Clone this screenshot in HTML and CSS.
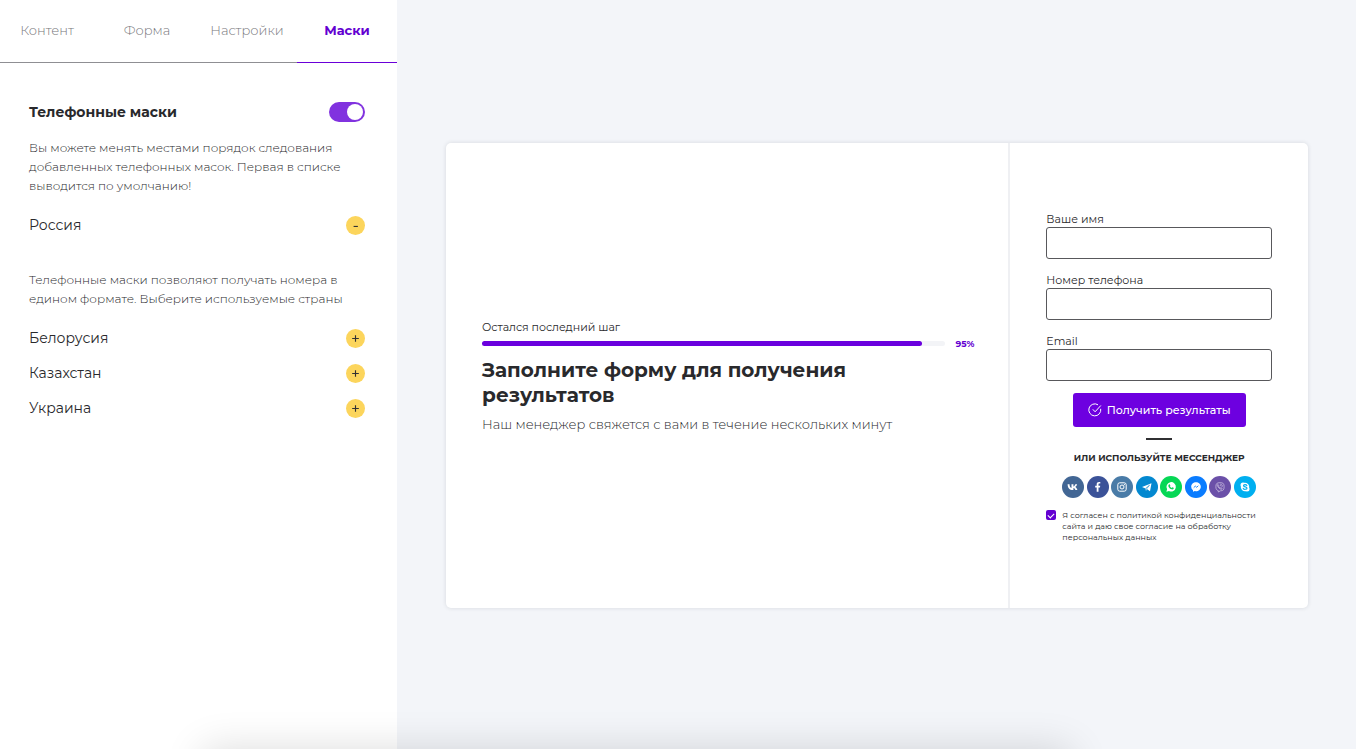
FILE: index.html
```html
<!DOCTYPE html>
<html lang="ru">
<head>
<meta charset="utf-8">
<title>Маски</title>
<link rel="stylesheet" href="styles.css">
</head>
<body>
<div class="app">
  <aside class="sidebar">
    <nav class="tabs">
      <button class="tab" type="button">Контент</button>
      <button class="tab" type="button">Форма</button>
      <button class="tab" type="button">Настройки</button>
      <button class="tab tab-active" type="button">Маски</button>
    </nav>
    <section class="settings">
      <div class="row">
        <label class="settings-title" for="masks">Телефонные маски</label>
        <input class="switch" id="masks" type="checkbox" role="switch" checked>
      </div>
      <p class="note">Вы можете менять местами порядок следования добавленных телефонных масок. Первая в списке выводится по умолчанию!</p>
      <ul class="countries">
        <li class="row"><span>Россия</span><button class="round" type="button" aria-label="Убрать Россия"><svg viewBox="0 0 20 20"><path d="M8 11h4.500"/></svg></button></li>
      </ul>
      <p class="note note-second">Телефонные маски позволяют получать номера в едином формате. Выберите используемые страны</p>
      <ul class="countries">
        <li class="row"><span>Белорусия</span><button class="round" type="button" aria-label="Добавить Белорусия"><svg viewBox="0 0 20 20"><path d="M6.500 10h7M10 6.500v7"/></svg></button></li>
        <li class="row"><span>Казахстан</span><button class="round" type="button" aria-label="Добавить Казахстан"><svg viewBox="0 0 20 20"><path d="M6.500 10h7M10 6.500v7"/></svg></button></li>
        <li class="row"><span>Украина</span><button class="round" type="button" aria-label="Добавить Украина"><svg viewBox="0 0 20 20"><path d="M6.500 10h7M10 6.500v7"/></svg></button></li>
      </ul>
    </section>
  </aside>
  <main class="preview">
    <div class="card">
      <section class="intro">
        <p class="step">Остался последний шаг</p>
        <div class="progress">
          <div class="track"><div class="fill" style="width:95%"></div></div>
          <span class="percent">95%</span>
        </div>
        <h1 class="headline">Заполните форму для получения результатов</h1>
        <p class="lead">Наш менеджер свяжется с вами в течение нескольких минут</p>
      </section>
      <form class="form">
        <div class="fields">
          <div class="field"><label for="name">Ваше имя</label><input id="name" type="text"></div>
          <div class="field"><label for="phone">Номер телефона</label><input id="phone" type="tel"></div>
          <div class="field"><label for="email">Email</label><input id="email" type="email"></div>
        </div>
        <button class="submit" type="button">
          <svg viewBox="0 0 14 14"><path d="M12.700 5.800A6 6 0 1 1 10 1.800M4.800 6.300l2.300 2.500 5.700-6.300"/></svg>
          Получить результаты
        </button>
        <hr class="dash">
        <p class="or">ИЛИ ИСПОЛЬЗУЙТЕ МЕССЕНДЖЕР</p>
        <div class="social">
          <a class="vk" href="#" aria-label="VK"><svg viewBox="0 0 22 22"><path fill="#fff" d="M10.800 14c-3.300 0-5.100-2.200-5.200-5.800h1.900c.1 2.600 1.200 3.700 2 3.900V8.200h1.900v2.300c.8-.1 1.600-1.100 1.900-2.300h1.800c-.3 1.300-1.200 2.300-1.900 2.700.7.300 1.700 1.200 2.200 3.100h-2c-.4-1.100-1.100-1.800-2-1.900V14z"/></svg></a>
          <a class="fb" href="#" aria-label="Facebook"><svg viewBox="0 0 22 22"><path fill="#fff" d="M9.700 15.800v-4.300H8.200V9.700h1.500V8.300c0-1.600.9-2.400 2.300-2.400.6 0 1.100.1 1.300.1v1.600h-.9c-.7 0-.9.4-.9.9v1.200h1.700l-.2 1.800h-1.500v4.300z"/></svg></a>
          <a class="ig" href="#" aria-label="Instagram"><svg viewBox="0 0 22 22"><g fill="none" stroke="#fff"><rect x="6.800" y="6.800" width="8.400" height="8.400" rx="2"/><circle cx="11" cy="11" r="2"/></g><circle cx="13.400" cy="8.600" r=".6" fill="#fff"/></svg></a>
          <a class="tg" href="#" aria-label="Telegram"><svg viewBox="0 0 22 22"><path fill="#fff" d="M6 11 15.500 7.200 14 15.200 11.300 13.300 9.900 14.800 9.500 12.400z"/><path fill="none" stroke="#0f88cc" stroke-width=".6" d="M9.600 12.400l3.900-3.200-2.900 3.600-.7 1.700"/></svg></a>
          <a class="wa" href="#" aria-label="WhatsApp"><svg viewBox="0 0 22 22"><path fill="#fff" d="M6.400 15.700l.7-2.500A4.700 4.700 0 1 1 9 15z"/><path fill="#06d755" d="M8.900 8.400c.5-.5.900-.2 1 .2l.4.900c.1.300-.3.600-.4.800.4.800 1 1.300 1.800 1.600.3-.1.500-.7.800-.6l1.100.5c.3.200.1.900-.2 1.200-.6.600-1.500.5-2.500 0-1.100-.5-2.100-1.500-2.400-2.600-.3-.8-.1-1.500.4-2z"/></svg></a>
          <a class="ms" href="#" aria-label="Messenger"><svg viewBox="0 0 22 22"><path fill="#fff" d="M11 6.200c2.700 0 4.800 1.900 4.800 4.500s-2.100 4.500-4.800 4.500l-1.200-.2-1.800.8v-1.600a4.300 4.300 0 0 1-1.800-3.500c0-2.600 2.100-4.500 4.800-4.500z"/><path fill="none" stroke="#0a7cff" stroke-width=".9" d="M8.700 11.700l1.600-1.600 1.400 1.200 1.600-1.600"/></svg></a>
          <a class="vb" href="#" aria-label="Viber"><svg viewBox="0 0 22 22"><g fill="none" stroke="#d3c8e5" stroke-width=".7"><path d="M9.300 14.600c-2-.5-2.400-1.600-2.400-3.900 0-3.100.9-4 4.100-4s4.100.9 4.100 4-.9 4.100-3.600 4.100L9.300 16z"/><path d="M9 8.400c-.8.400-.7 1.100-.2 2.100.7 1.300 1.800 2.300 3.200 2.800.6.200 1-.3 1.200-.8l-1.300-.9-.7.500c-.8-.3-1.300-.8-1.500-1.500l.4-.6zM11.200 8.200c1.500.1 2.300 1 2.300 2.400M11.300 9.400c.7.100 1 .5 1 1.100"/></g></svg></a>
          <a class="sk" href="#" aria-label="Skype"><svg viewBox="0 0 22 22"><g fill="#fff"><circle cx="11" cy="11" r="4.200"/><circle cx="9" cy="9" r="2.500"/><circle cx="13" cy="13" r="2.500"/></g><path fill="none" stroke="#00aff0" stroke-width="1.200" stroke-linecap="round" d="M12.800 9.500c-.5-1.100-3.300-1.100-3.300.2 0 1.500 3.500.8 3.500 2.500 0 1.400-3.200 1.400-3.700.2"/></svg></a>
        </div>
        <div class="consent">
          <input id="consent" type="checkbox" checked>
          <label for="consent">Я согласен с политикой конфиденциальности сайта и даю свое согласие на обработку персональных данных</label>
        </div>
      </form>
    </div>
  </main>
</div>
</body>
</html>
```
FILE: styles.css
```css
* { box-sizing: border-box; margin: 0; padding: 0; }

body {
  font-family: Montserrat, Inter, "Open Sans", sans-serif;
  color: #29292c;
  background: #f3f5f9;
}

button, input { font: inherit; color: inherit; }

.app {
  position: relative;
  display: grid;
  grid-template-columns: 397px 1fr;
  min-height: 100vh;
  overflow: hidden;
}

/* soft shade along the lower edge */
.app::after {
  content: "";
  position: absolute;
  top: 100%;
  left: 15%;
  right: 21%;
  height: 60px;
  box-shadow: 0 0 40px rgba(0, 0, 0, 0.14);
  pointer-events: none;
}

.sidebar { background: #fff; }

.tabs {
  display: grid;
  grid-template-columns: repeat(4, 1fr);
  margin-left: -3px;
}

.tab {
  height: 63px;
  padding-bottom: 2px;
  border: 0;
  border-bottom: 1px solid #8f8f93;
  background: none;
  font-size: 13px;
  font-weight: 300;
  color: #77777c;
}

.tab-active {
  border-color: #6a00d8;
  font-weight: 700;
  color: #6300d1;
}

.settings { padding: 39px 32px 39px 29px; }

.row {
  display: flex;
  align-items: center;
  justify-content: space-between;
  height: 20px;
}

.settings-title { font-size: 14px; font-weight: 700; }

.switch {
  appearance: none;
  width: 36px;
  height: 20px;
  padding: 2px;
  border-radius: 10px;
  background: #8132df;
}

.switch::before {
  content: "";
  display: block;
  width: 16px;
  height: 16px;
  border-radius: 50%;
  background: #fff;
}

.switch:checked::before { margin-left: auto; }

.note {
  margin: 16px 0 20px;
  font-size: 12px;
  font-weight: 300;
  line-height: 19px;
}

.note-second { margin-top: 35px; }

.countries {
  display: grid;
  gap: 15px;
  list-style: none;
  font-size: 14px;
}

.round {
  width: 19px;
  height: 19px;
  border: 0;
  border-radius: 50%;
  background: #fcd55c;
}

.round svg {
  display: block;
  fill: none;
  stroke: #303033;
  stroke-width: 1.2;
}

.preview {
  display: grid;
  align-items: center;
  padding: 50px 48px 48px 49px;
}

.card {
  display: grid;
  grid-template-columns: 565fr 298fr;
  min-height: 465px;
  border-radius: 5px;
  background: #fff;
  box-shadow: 0 0 4px rgba(40, 50, 60, 0.14);
}

.intro {
  display: flex;
  flex-direction: column;
  justify-content: center;
  padding: 36px 34px 36px 36px;
  border-right: 2px solid #eff0f3;
}

.step { font-size: 11px; line-height: 16px; }

.progress {
  display: flex;
  align-items: center;
  gap: 10px;
  margin: 2px 0 7px;
}

.track {
  flex: 1;
  height: 5px;
  border-radius: 3px;
  background: #f3f4f7;
}

.fill {
  height: 100%;
  border-radius: 3px;
  background: #6a00de;
}

.percent {
  font-size: 9px;
  font-weight: 700;
  line-height: 14px;
  color: #6300d1;
}

.headline {
  font-size: 20px;
  font-weight: 700;
  line-height: 25px;
}

.lead {
  margin-top: 7px;
  font-size: 13px;
  font-weight: 300;
  line-height: 18px;
}

.form {
  display: flex;
  flex-direction: column;
  align-items: center;
  justify-content: center;
  padding: 39px 36px 36px;
}

.fields {
  display: grid;
  gap: 13px;
  width: 100%;
}

.field { display: grid; }

.field label { font-size: 11px; line-height: 16px; }

.field input {
  width: 100%;
  height: 32px;
  padding: 0 8px;
  border: 1px solid #58585b;
  border-radius: 3px;
  background: #fff;
  font-size: 12px;
}

.submit {
  display: flex;
  align-items: center;
  gap: 5px;
  height: 34px;
  margin-top: 12px;
  padding: 0 15px;
  border: 0;
  border-radius: 3px;
  background: #6d00e0;
  font-size: 11px;
  font-weight: 500;
  color: #fff;
}

.submit svg {
  width: 14px;
  height: 14px;
  fill: none;
  stroke: #fff;
}

.dash {
  width: 26px;
  height: 2px;
  margin: 11px 0;
  border: 0;
  background: #303033;
}

.or {
  font-size: 9px;
  font-weight: 700;
  line-height: 14px;
}

.social {
  display: flex;
  justify-content: space-between;
  width: 100%;
  margin: 11px 0 12px;
  padding: 0 16px;
}

.social a {
  width: 22px;
  height: 22px;
  border-radius: 50%;
}

.social svg { display: block; }

.vk { background: #426694; }
.fb { background: #3b5298; }
.ig { background: #497ba7; }
.tg { background: #0388d0; }
.wa { background: #06d755; }
.ms { background: #0a7cff; }
.vb { background: #6b50a8; }
.sk { background: #00aff0; }

.consent {
  display: flex;
  align-items: flex-start;
  gap: 6px;
  width: 100%;
}

.consent input {
  appearance: none;
  flex: none;
  display: grid;
  place-items: center;
  width: 10px;
  height: 10px;
  border-radius: 2px;
  background: #6300d1;
}

.consent input:checked::before {
  content: "";
  width: 5px;
  height: 3px;
  margin-bottom: 1px;
  border: solid #fff;
  border-width: 0 0 1px 1px;
  transform: rotate(-45deg);
}

.consent label {
  font-size: 8px;
  line-height: 11px;
}
```
